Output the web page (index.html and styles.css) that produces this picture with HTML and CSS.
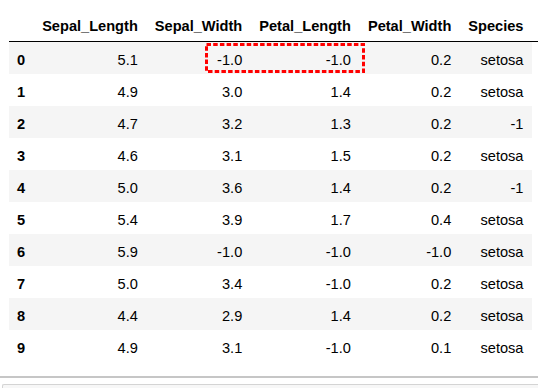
FILE: index.html
```html
<!DOCTYPE html>
<html>
<head>
<meta charset="utf-8">
<link rel="stylesheet" href="styles.css">
</head>
<body>
<div class="output">
  <table class="dataframe">
    <thead>
      <tr><th class="idx"></th><th>Sepal_Length</th><th>Sepal_Width</th><th>Petal_Length</th><th>Petal_Width</th><th class="last">Species</th></tr>
    </thead>
    <tbody>
      <tr><th>0</th><td>5.1</td><td>-1.0</td><td>-1.0</td><td>0.2</td><td>setosa</td></tr>
      <tr><th>1</th><td>4.9</td><td>3.0</td><td>1.4</td><td>0.2</td><td>setosa</td></tr>
      <tr><th>2</th><td>4.7</td><td>3.2</td><td>1.3</td><td>0.2</td><td>-1</td></tr>
      <tr><th>3</th><td>4.6</td><td>3.1</td><td>1.5</td><td>0.2</td><td>setosa</td></tr>
      <tr><th>4</th><td>5.0</td><td>3.6</td><td>1.4</td><td>0.2</td><td>-1</td></tr>
      <tr><th>5</th><td>5.4</td><td>3.9</td><td>1.7</td><td>0.4</td><td>setosa</td></tr>
      <tr><th>6</th><td>5.9</td><td>-1.0</td><td>-1.0</td><td>-1.0</td><td>setosa</td></tr>
      <tr><th>7</th><td>5.0</td><td>3.4</td><td>-1.0</td><td>0.2</td><td>setosa</td></tr>
      <tr><th>8</th><td>4.4</td><td>2.9</td><td>1.4</td><td>0.2</td><td>setosa</td></tr>
      <tr><th>9</th><td>4.9</td><td>3.1</td><td>-1.0</td><td>0.1</td><td>setosa</td></tr>
    </tbody>
  </table>
  <svg class="mark" width="160" height="30" viewBox="0 0 160 30">
    <rect x="1.5" y="1.5" width="157" height="27" fill="none" stroke="#ff0000" stroke-width="3" stroke-dasharray="4.5 2.2"/>
  </svg>
</div>
<div class="divider"></div>
<div class="nextcell"></div>
</body>
</html>
```
FILE: styles.css
```css
html, body {
  margin: 0;
  padding: 0;
  background: #ffffff;
}
body {
  font-family: "Liberation Sans", Arial, sans-serif;
  font-size: 14.6px;
  color: #000000;
}
.output {
  position: relative;
  padding: 9px 0 0 9px;
}
.dataframe {
  border-collapse: collapse;
  border-spacing: 0;
}
.dataframe th,
.dataframe td {
  line-height: 17px;
  white-space: nowrap;
  text-align: right;
}
.dataframe thead th {
  font-weight: bold;
  padding: 8.5px 8.5px 6.5px 8.5px;
  border-bottom: 1px solid #000000;
}
.dataframe thead th.last {
  position: relative;
}
.dataframe thead th.last::after {
  content: "";
  position: absolute;
  left: 100%;
  bottom: -1px;
  width: 12px;
  height: 1px;
  background: #000000;
}
.dataframe tbody th {
  font-weight: bold;
  text-align: left;
  padding: 9.5px 8.5px 5.5px 8px;
}
.dataframe tbody td {
  padding: 9.5px 8.5px 5.5px 8.5px;
}
.dataframe tbody tr:nth-child(odd) {
  background: #f5f5f5;
}
.mark {
  position: absolute;
  left: 205px;
  top: 43px;
}
.divider {
  margin-top: 14px;
  border-top: 2px solid #c6c6c6;
}
.nextcell {
  margin: 6px 0 0 2px;
  height: 20px;
  border: 1px solid #d4d4d4;
  border-right: none;
  border-radius: 2px 0 0 0;
  background: #f7f7f7;
}
```
